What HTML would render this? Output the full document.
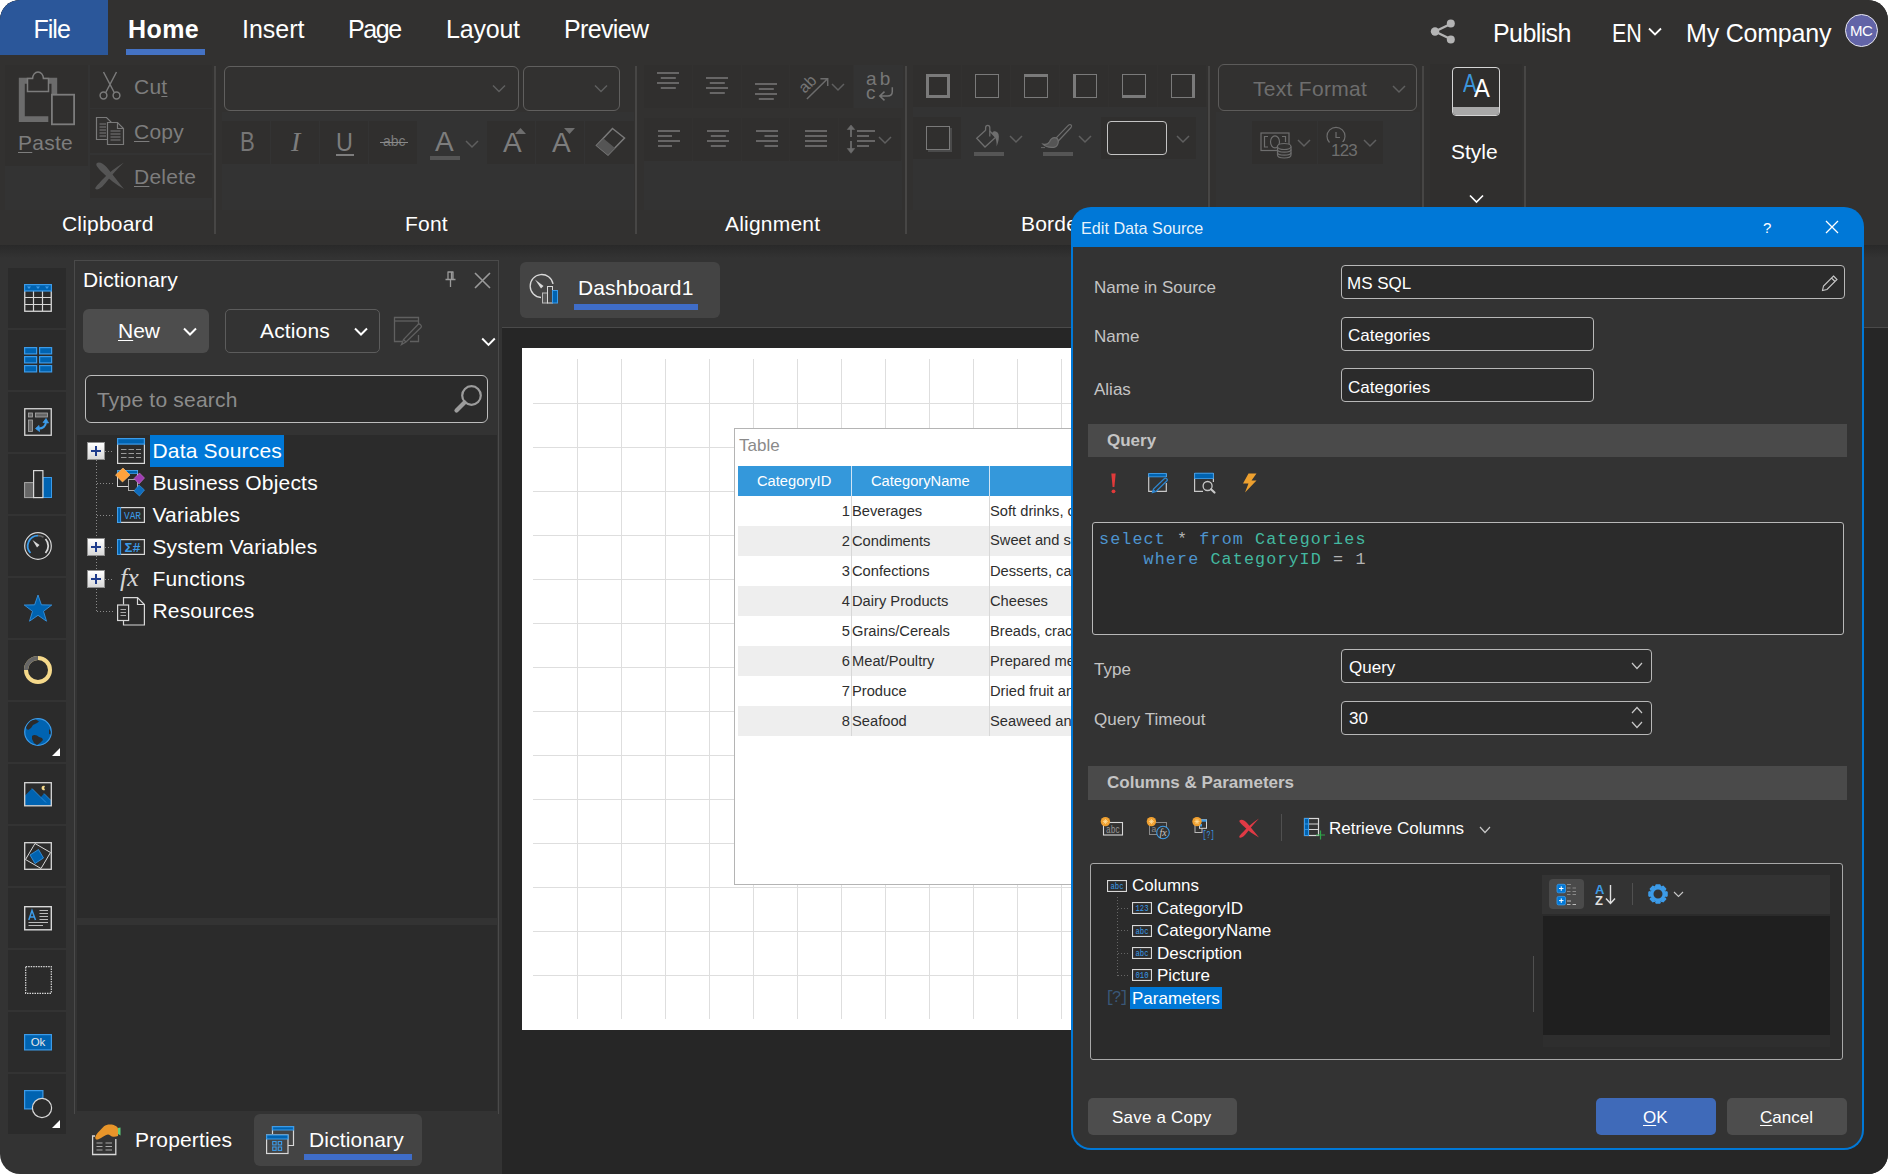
<!DOCTYPE html>
<html lang="en">
<head>
<meta charset="utf-8">
<title>Edit Data Source</title>
<style>
*{box-sizing:border-box;margin:0;padding:0}
html,body{width:1888px;height:1174px;overflow:hidden;background:#fff}
body{font-family:"Liberation Sans",Arial,sans-serif;color:#fff;font-size:20px}
#app{position:absolute;left:0;top:0;width:1888px;height:1174px;background:#333333;border-radius:20px;overflow:hidden}
.abs{position:absolute}
.t{position:absolute;white-space:nowrap;line-height:1}
svg{position:absolute;overflow:visible}
.u{text-decoration:underline;text-decoration-thickness:1px;text-underline-offset:1.500px}
</style>
</head>
<body>
<div id="app">
<!-- TOP BAR -->
<div class="abs" style="left:0;top:0;width:1888px;height:245px;background:#323130"></div>
<div class="abs" style="left:0;top:0;width:108px;height:54.500px;background:#2b579a"></div>
<div class="t tab" id="tFile" style="left:33.500px;top:17px;font-size:25px;letter-spacing:-1.0px">File</div>
<div class="t tab" id="tHome" style="left:128px;top:17px;font-size:25px;font-weight:bold;letter-spacing:0.400px">Home</div>
<div class="abs" style="left:126px;top:49px;width:79px;height:5.500px;background:#4472c4"></div>
<div class="t tab" id="tInsert" style="left:242px;top:17px;font-size:25px">Insert</div>
<div class="t tab" id="tPage" style="left:348px;top:17px;font-size:25px;letter-spacing:-1.4px">Page</div>
<div class="t tab" id="tLayout" style="left:446px;top:17px;font-size:25px;letter-spacing:-0.2px">Layout</div>
<div class="t tab" id="tPreview" style="left:564px;top:17px;font-size:25px;letter-spacing:-0.65px">Preview</div>
<svg style="left:1430px;top:18.600px" width="26" height="25" viewBox="0 0 26 25"><g stroke="#b4b4b4" stroke-width="2.4" fill="none"><path d="M5 12.5 L20.5 5 M5 12.5 L20.5 20"/></g><g fill="#b4b4b4"><circle cx="5" cy="12.5" r="4.2"/><circle cx="20.8" cy="4.6" r="4"/><circle cx="20.8" cy="20.4" r="4"/></g></svg>
<div class="t tab" id="tPublish" style="left:1493px;top:21px;font-size:25px;letter-spacing:-0.6px">Publish</div>
<div class="t tab" id="tEN" style="left:1611.500px;top:21px;font-size:25px;transform:scaleX(0.860);transform-origin:left top">EN</div>
<svg style="left:1648px;top:27px" width="14" height="9" viewBox="0 0 14 9"><path d="M1 1.5 L7 7.5 L13 1.5" stroke="#fff" stroke-width="1.8" fill="none"/></svg>
<div class="t tab" id="tCompany" style="left:1686px;top:21px;font-size:25px;letter-spacing:-0.2px">My Company</div>
<div class="abs" style="left:1845px;top:14px;width:33px;height:33px;border-radius:50%;background:#6264a7;border:1.5px solid #e8e8f0"></div>
<div class="t" id="tMC" style="left:1850px;top:23px;font-size:15px;letter-spacing:-0.5px">MC</div>
<!-- RIBBON A: clipboard + font -->
<style>
.rb{position:absolute;background:#302f2e}
.rg{position:absolute;background:#333333}
.rsep{position:absolute;top:66px;width:2px;height:168px;background:#474645}
.rl{letter-spacing:0.200px;position:absolute;white-space:nowrap;line-height:1;font-size:21px;color:#fff;top:213px}
.dis{color:#7d7d7d}
</style>
<div class="rg" style="left:5px;top:65px;width:207px;height:145px"></div>
<div class="rb" style="left:5px;top:65px;width:83px;height:101px"></div>
<div class="rb" style="left:90px;top:65px;width:122px;height:43px"></div>
<div class="rb" style="left:90px;top:109px;width:122px;height:44px"></div>
<div class="rb" style="left:90px;top:155px;width:122px;height:43px"></div>
<!-- paste icon -->
<svg style="left:18px;top:70px" width="58" height="56" viewBox="0 0 58 56">
<path d="M0.800 7.700 H39.200 V24 H33.500 V13.700 H6.800 V46.300 H30.300 V52 H0.800 Z" fill="#6c6c6c"/>
<path d="M9.500 21.500 V8.600 H14.600 A5.400 6.700 0 0 1 25.400 8.600 H30.500 V21.500 Z" stroke="#7c7c7c" stroke-width="1.500" fill="#302f2e"/>
<rect x="33.900" y="24.700" width="22.200" height="29.600" stroke="#7c7c7c" stroke-width="1.800" fill="#302f2e"/>
</svg>
<div class="t dis" id="rPaste" style="letter-spacing:0.250px;left:18px;top:132px;font-size:21px"><span class="u">P</span>aste</div>
<!-- cut icon -->
<svg style="left:99px;top:71px" width="22" height="30" viewBox="0 0 22 30" fill="none" stroke="#7a7a7a" stroke-width="1.5">
<path d="M4.5 1 L15.5 22 M17.5 1 L6.5 22"/><circle cx="4.5" cy="24.5" r="3.4"/><circle cx="17.5" cy="24.5" r="3.4"/></svg>
<div class="t dis" id="rCut" style="letter-spacing:0.250px;left:134px;top:76px;font-size:21px">Cu<span class="u">t</span></div>
<!-- copy icon -->
<svg style="left:95px;top:116px" width="30" height="30" viewBox="0 0 30 30" fill="#323130" stroke="#7a7a7a" stroke-width="1.2">
<path d="M1.5 1.5 H11.5 L16.5 6.5 V23.5 H1.5 Z"/><path d="M4.5 8 H11 M4.5 11 H11 M4.5 14 H11 M4.5 17 H11 M4.5 20 H11" stroke-width="1"/>
<path d="M12.5 6.5 H22.5 L28.5 12.5 V28.5 H12.5 Z"/><path d="M22.5 6.5 V12.5 H28.5" fill="none"/><path d="M15.5 15 H25.5 M15.5 18 H25.5 M15.5 21 H25.5 M15.5 24 H25.5" stroke-width="1"/></svg>
<div class="t dis" id="rCopy" style="letter-spacing:0.250px;left:134px;top:121px;font-size:21px"><span class="u">C</span>opy</div>
<!-- delete icon -->
<svg style="left:94px;top:161px" width="31" height="29" viewBox="0 0 31 29"><path d="M2.500 2.500 C4.500 0 9 2 12.500 6 C18 12.500 24 21 30 28 C22 23.500 14.500 17.500 9 12 C4.500 7.500 1.500 4.500 2.500 2.500 Z" fill="#555"/><path d="M30 1.500 C22 6 14.500 12 8.500 18.500 C4 23.500 0.500 26.500 1.500 28 C4 29.500 8 26.500 11.500 22 C16.500 15.500 23 8 30 1.500 Z" fill="#555"/></svg>
<div class="t dis" id="rDelete" style="letter-spacing:0.250px;left:134px;top:166px;font-size:21px"><span class="u">D</span>elete</div>
<div class="rl" id="lClipboard" style="left:62px">Clipboard</div>
<div class="rsep" style="left:214px"></div>
<!-- Font group -->
<div class="rg" style="left:222px;top:112px;width:412px;height:98px"></div>
<div class="abs" style="left:224px;top:66px;width:295px;height:45px;border:1.300px solid #605f5e;border-radius:6px"></div>
<svg style="left:492px;top:84px" width="14" height="9" viewBox="0 0 14 9"><path d="M1 1.500 L7 7.500 L13 1.500" stroke="#5f5f5f" stroke-width="1.5" fill="none"/></svg>
<div class="abs" style="left:523px;top:66px;width:97px;height:45px;border:1.300px solid #605f5e;border-radius:6px"></div>
<svg style="left:594px;top:84px" width="14" height="9" viewBox="0 0 14 9"><path d="M1 1.500 L7 7.500 L13 1.500" stroke="#5f5f5f" stroke-width="1.5" fill="none"/></svg>
<div class="rb" style="left:222px;top:121px;width:48px;height:43px"></div>
<div class="rb" style="left:271px;top:121px;width:48px;height:43px"></div>
<div class="rb" style="left:320px;top:121px;width:48px;height:43px"></div>
<div class="rb" style="left:369px;top:121px;width:48px;height:43px"></div>
<div class="rg" style="left:418px;top:121px;width:68px;height:43px"></div>
<div class="rb" style="left:487px;top:121px;width:48px;height:43px"></div>
<div class="rb" style="left:536px;top:121px;width:48px;height:43px"></div>
<div class="rb" style="left:585px;top:121px;width:49px;height:43px"></div>
<!-- font buttons -->
<div class="t dis" id="fB" style="left:240px;top:129px;font-size:27px;transform:scaleX(0.820);transform-origin:left top;color:#767676">B</div>
<div class="t dis" id="fI" style="left:291px;top:128px;font-size:28px;font-family:'Liberation Serif',serif;font-style:italic">I</div>
<div class="t dis" id="fU" style="left:336px;top:129px;font-size:26px;transform:scaleX(0.9);transform-origin:left top">U</div>
<div class="abs" style="left:336px;top:154px;width:18px;height:2px;background:#7d7d7d"></div>
<div class="t dis" id="fabc" style="left:383px;top:134px;font-size:14px">abc</div>
<div class="abs" style="left:380px;top:142px;width:28px;height:1px;background:#8a8a8a"></div>
<div class="t dis" id="fA" style="left:435px;top:128px;font-size:28px">A</div>
<div class="abs" style="left:430px;top:156px;width:30px;height:4px;background:#555"></div>
<svg style="left:465px;top:140px" width="14" height="9" viewBox="0 0 14 9"><path d="M1 1 L7 7 L13 1" stroke="#5f5f5f" stroke-width="1.5" fill="none"/></svg>
<div class="t dis" id="fAu" style="left:503px;top:129px;font-size:28px">A</div>
<svg style="left:515px;top:128px" width="11" height="6" viewBox="0 0 11 6"><path d="M0 6 L5.500 0 L11 6 Z" fill="#6e6e6e"/></svg>
<div class="t dis" id="fAd" style="left:552px;top:129px;font-size:28px">A</div>
<svg style="left:564px;top:128px" width="11" height="6" viewBox="0 0 11 6"><path d="M0 0 L5.500 6 L11 0 Z" fill="#6e6e6e"/></svg>
<svg style="left:595px;top:127px" width="31" height="30" viewBox="0 0 31 30"><path d="M17.500 1.500 L29.500 11 L13 28 L1.500 18.500 Z" fill="none" stroke="#7a7a7a" stroke-width="1.5"/><path d="M8.500 11.500 L20 21 L13 28 L1.500 18.500 Z" fill="#555"/></svg>
<div class="rl" id="lFont" style="left:405px">Font</div>
<div class="rsep" style="left:635px"></div>
<!-- RIBBON B: alignment -->
<div class="rg" style="left:644px;top:160px;width:258px;height:50px"></div>
<div class="rb" style="left:644px;top:65px;width:48px;height:43px"></div>
<div class="rb" style="left:693px;top:65px;width:48px;height:43px"></div>
<div class="rb" style="left:742px;top:65px;width:47px;height:43px"></div>
<div class="rb" style="left:790px;top:65px;width:63px;height:43px"></div>
<div class="rg" style="left:854px;top:65px;width:49px;height:43px"></div>
<div class="rb" style="left:644px;top:117.500px;height:43.500px;width:48px"></div>
<div class="rb" style="left:693px;top:117.500px;height:43.500px;width:48px"></div>
<div class="rb" style="left:742px;top:117.500px;height:43.500px;width:47px"></div>
<div class="rb" style="left:790px;top:117.500px;height:43.500px;width:48px"></div>
<div class="rb" style="left:839px;top:117.500px;height:43.500px;width:62px"></div>
<svg style="left:0;top:0" width="1" height="1"><path d="M657.0 73 H679.0 M660.8 78 H675.8 M657.0 83 H679.0 M660.8 88 H675.8 " stroke="#7a7a7a" stroke-width="1.6" fill="none"/></svg>
<svg style="left:0;top:0" width="1" height="1"><path d="M706.0 78 H728.0 M709.8 83 H724.8 M706.0 88 H728.0 M709.8 93 H724.8 " stroke="#7a7a7a" stroke-width="1.6" fill="none"/></svg>
<svg style="left:0;top:0" width="1" height="1"><path d="M755.0 84 H777.0 M758.8 89 H773.8 M755.0 94 H777.0 M758.8 99 H773.8 " stroke="#7a7a7a" stroke-width="1.6" fill="none"/></svg>
<svg style="left:0;top:0" width="1" height="1"><path d="M658.0 131 H680.0 M658.0 136 H672.0 M658.0 141 H680.0 M658.0 146 H672.0 " stroke="#7a7a7a" stroke-width="1.6" fill="none"/></svg>
<svg style="left:0;top:0" width="1" height="1"><path d="M707.0 131 H729.0 M710.8 136 H725.8 M707.0 141 H729.0 M710.8 146 H725.8 " stroke="#7a7a7a" stroke-width="1.6" fill="none"/></svg>
<svg style="left:0;top:0" width="1" height="1"><path d="M756.0 131 H778.0 M764.5 136 H778.0 M756.0 141 H778.0 M764.5 146 H778.0 " stroke="#7a7a7a" stroke-width="1.6" fill="none"/></svg>
<svg style="left:0;top:0" width="1" height="1"><path d="M805.0 131 H827.0 M805.0 136 H827.0 M805.0 141 H827.0 M805.0 146 H827.0 " stroke="#7a7a7a" stroke-width="1.6" fill="none"/></svg>
<svg style="left:0;top:0" width="1" height="1"><path d="M857.0 131 H875.0 M857.0 136 H869.0 M857.0 141 H875.0 M857.0 146 H869.0 " stroke="#7a7a7a" stroke-width="1.6" fill="none"/></svg>
<svg style="left:846px;top:124px" width="10" height="30" viewBox="0 0 10 30"><path d="M5 4 V13 M5 17 V26" stroke="#6c6c6c" stroke-width="1.800"/><path d="M1.300 5.500 L5 1 L8.700 5.500 Z M1.300 24.500 L5 29.300 L8.700 24.500 Z" fill="#6c6c6c" stroke="#6c6c6c" stroke-width="0.600"/></svg>
<svg style="left:878px;top:136px" width="14" height="9" viewBox="0 0 14 9"><path d="M1 1 L7 7 L13 1" stroke="#5f5f5f" stroke-width="1.5" fill="none"/></svg>
<svg style="left:831px;top:83px" width="14" height="9" viewBox="0 0 14 9"><path d="M1 1 L7 7 L13 1" stroke="#5f5f5f" stroke-width="1.5" fill="none"/></svg>
<svg style="left:0;top:0" width="1" height="1"><text transform="translate(808.300,85) rotate(-45)" x="0" y="4" text-anchor="middle" font-size="16" fill="#757575" font-family="Liberation Sans,Arial,sans-serif">ab</text><path d="M806.900 99 L827.500 78.700 M820.400 78.700 H827.700 V86" stroke="#6c6c6c" stroke-width="1.500" fill="none"/><path d="M892.300 87.200 V91.500 Q892.300 96 887.500 96 H880 M884.500 91.600 L879.800 96 L884.500 100.400" stroke="#757575" stroke-width="1.500" fill="none"/></svg>
<div class="t dis" id="aWrap1" style="left:866px;top:68.600px;font-size:19px;letter-spacing:3.200px;color:#777">ab</div>
<div class="t dis" id="aWrap2" style="left:866px;top:82.900px;font-size:19px;color:#777">c</div>
<div class="rl" id="lAlign" style="left:725px">Alignment</div>
<div class="rsep" style="left:905px"></div>
<!-- RIBBON C: borders -->
<div class="rg" style="left:913px;top:107px;width:294px;height:103px"></div>
<div class="rb" style="left:913px;top:65px;width:48px;height:42px"></div>
<div class="rb" style="left:962px;top:65px;width:48px;height:42px"></div>
<div class="rb" style="left:1011px;top:65px;width:48px;height:42px"></div>
<div class="rb" style="left:1060px;top:65px;width:48px;height:42px"></div>
<div class="rb" style="left:1109px;top:65px;width:48px;height:42px"></div>
<div class="rb" style="left:1158px;top:65px;width:48px;height:42px"></div>
<div class="rb" style="left:913px;top:117px;width:48px;height:42px"></div>
<div class="rb" style="left:1101px;top:117px;width:95px;height:42px"></div>
<div class="abs" style="left:926px;top:74px;width:24px;height:24px;border:3px solid #7a7a7a"></div>
<div class="abs" style="left:975px;top:74px;width:24px;height:24px;border:1.3px solid #7a7a7a"></div>
<div class="abs" style="left:1024px;top:74px;width:24px;height:24px;border:1.3px solid #7a7a7a;border-top-width:3.5px"></div>
<div class="abs" style="left:1073px;top:74px;width:24px;height:24px;border:1.3px solid #7a7a7a;border-left-width:3.5px"></div>
<div class="abs" style="left:1122px;top:74px;width:24px;height:24px;border:1.3px solid #7a7a7a;border-bottom-width:3.5px"></div>
<div class="abs" style="left:1171px;top:74px;width:24px;height:24px;border:1.3px solid #7a7a7a;border-right-width:3.5px"></div>
<div class="abs" style="left:926px;top:126px;width:24px;height:24px;border:1.3px solid #7a7a7a;box-shadow:2px 2px 0 #4a4a4a"></div>
<svg style="left:975px;top:123px" width="28" height="26" viewBox="0 0 28 26" fill="none" stroke="#6e6e6e" stroke-width="1.300"><path d="M10.600 7.200 L1.700 15.300 L10 24 L20.700 14.300 L14.800 8"/><path d="M10.600 7.500 V4.700 C10.600 1.700 14.800 1.700 14.800 4.700 V13.600"/><path d="M17.200 10 C18 7.500 22 7.500 23.500 11 C24.500 14 23.500 19 21.600 23.500 C21.800 19 21 15.500 19.500 13.500 C18.500 12.300 17 11.500 17.200 10 Z" fill="#6e6e6e" stroke="none"/></svg>
<div class="abs" style="left:974px;top:152px;width:30px;height:4px;background:#555"></div>
<svg style="left:1009px;top:135px" width="14" height="9" viewBox="0 0 14 9"><path d="M1 1 L7 7 L13 1" stroke="#5f5f5f" stroke-width="1.5" fill="none"/></svg>
<svg style="left:1041px;top:122px" width="32" height="28" viewBox="0 0 32 28" fill="none" stroke="#6e6e6e" stroke-width="1.200"><path d="M15 16.200 L27.500 3.200 C29.500 1.500 31.500 3.500 30 5.500 L17.300 19 Z"/><path d="M15 15.800 C16.500 16.500 17.500 18 17.300 20 C17 23 15.500 25 13 25.300 C9.500 25.700 5 25.500 2 22.200 C5 22.800 7.500 21.500 8.500 19.800 C9.500 17.500 12 15 15 15.800 Z" fill="#555" stroke="#6e6e6e"/><path d="M0 25.600 H4" stroke-width="0.900"/></svg>
<div class="abs" style="left:1043px;top:152px;width:30px;height:4px;background:#555"></div>
<svg style="left:1078px;top:135px" width="14" height="9" viewBox="0 0 14 9"><path d="M1 1 L7 7 L13 1" stroke="#5f5f5f" stroke-width="1.5" fill="none"/></svg>
<div class="abs" style="left:1107px;top:121px;width:60px;height:34px;border:1.5px solid #c4c4c4;border-radius:4px"></div>
<svg style="left:1176px;top:135px" width="14" height="9" viewBox="0 0 14 9"><path d="M1 1 L7 7 L13 1" stroke="#5f5f5f" stroke-width="1.5" fill="none"/></svg>
<div class="rl" id="lBorders" style="left:1021px">Borders</div>
<div class="rsep" style="left:1208px"></div>
<div class="rg" style="left:1216px;top:112px;width:204px;height:98px"></div>
<div class="abs" style="left:1218px;top:64px;width:199px;height:47px;border:1.300px solid #5c5b5a;border-radius:6px"></div>
<div class="t" id="tTF" style="left:1253px;top:78px;font-size:21px;color:#6e6e6e;letter-spacing:0.3px">Text Format</div>
<svg style="left:1392px;top:85px" width="14" height="9" viewBox="0 0 14 9"><path d="M1 1 L7 7 L13 1" stroke="#5f5f5f" stroke-width="1.5" fill="none"/></svg>
<div class="rb" style="left:1252px;top:121px;width:65px;height:43px"></div>
<div class="rb" style="left:1318px;top:121px;width:65px;height:43px"></div>
<svg style="left:1260px;top:132px" width="33" height="27" viewBox="0 0 33 27" fill="none" stroke="#6e6e6e" stroke-width="1.2"><rect x="1" y="1" width="28" height="17.500"/><path d="M8 4.500 H4.500 V15 H8 M22 4.500 H25.500 V10"/><ellipse cx="15" cy="9.800" rx="4.500" ry="6"/><path d="M17.500 14.500 V23 C17.500 27 31 27 31 23 V14.500" fill="#323130"/><ellipse cx="24.200" cy="14.500" rx="6.800" ry="3" fill="#323130"/><path d="M17.500 17.500 C17.500 21 31 21 31 17.500 M17.500 20.500 C17.500 24 31 24 31 20.500"/></svg>
<svg style="left:1297px;top:139px" width="14" height="9" viewBox="0 0 14 9"><path d="M1 1 L7 7 L13 1" stroke="#5f5f5f" stroke-width="1.5" fill="none"/></svg>
<svg style="left:1326px;top:127px" width="20" height="20" viewBox="0 0 20 20" fill="none" stroke="#6e6e6e" stroke-width="1.2"><path d="M3.500 15.500 A9 9 0 1 1 16.500 15.500"/><path d="M10 5 V10.500 H14"/></svg>
<div class="t" id="t123" style="left:1331px;top:142px;font-size:17px;color:#6e6e6e;letter-spacing:-0.8px;background:#2f2e2d">123</div>
<svg style="left:1363px;top:139px" width="14" height="9" viewBox="0 0 14 9"><path d="M1 1 L7 7 L13 1" stroke="#5f5f5f" stroke-width="1.5" fill="none"/></svg>
<div class="rsep" style="left:1422px"></div>
<div class="rb" style="left:1430px;top:64px;width:92px;height:181px"></div>
<div class="abs" style="left:1452px;top:67px;width:48px;height:49px;border:1.5px solid #d4d4d4;border-radius:4px;overflow:hidden;background:#2f2e2d"><div class="abs" style="left:0;top:39px;width:48px;height:9px;background:#a8a8a8"></div></div>
<div class="t" id="sA1" style="left:1463px;top:69.500px;font-size:26px;color:#3c96dc;transform:scaleX(0.78);transform-origin:left top">A</div>
<div class="t" id="sA2" style="left:1473.500px;top:75.500px;font-size:25px;color:#fff;transform:scaleX(0.95);transform-origin:left top">A</div>
<div class="t" id="sStyle" style="left:1451px;top:141px;font-size:21px;color:#fff">Style</div>
<svg style="left:1469px;top:194px" width="15" height="10" viewBox="0 0 15 10"><path d="M1 1.500 L7.500 8 L14 1.500" stroke="#fff" stroke-width="1.7" fill="none"/></svg>
<div class="rsep" style="left:1524px"></div>
<div class="abs" style="left:0;top:245px;width:1888px;height:13px;background:linear-gradient(#292929,#333333)"></div>
<!-- TOOLBOX -->
<div class="abs" style="left:8px;top:268px;width:58px;height:60px;background:#2b2b2b"></div>
<svg style="left:24px;top:284px" width="28" height="28" viewBox="0 0 28 28"><rect x="0.75" y="0.75" width="26.500" height="26.500" fill="none" stroke="#d8d8d8" stroke-width="1.3"/><path d="M9.500 7 V27 M18.500 7 V27 M1 13.500 H27 M1 20.500 H27" stroke="#d8d8d8" stroke-width="1.2"/><rect x="0.600" y="0.600" width="26.800" height="6.400" fill="#0063b1" stroke="#3c9be8" stroke-width="1.2"/><path d="M3 2.500 H7 L5 5 Z M12 2.500 H16 L14 5 Z M21 2.500 H25 L23 5 Z" fill="#3c9be8"/></svg>
<div class="abs" style="left:8px;top:330px;width:58px;height:60px;background:#2b2b2b"></div>
<svg style="left:24px;top:346px" width="28" height="28" viewBox="0 0 28 28"><rect x="0.6" y="1.6" width="12" height="6.300" fill="#0063b1" stroke="#3c9be8" stroke-width="1.200"/><rect x="15.6" y="1.6" width="12" height="6.300" fill="#0063b1" stroke="#3c9be8" stroke-width="1.200"/><rect x="0.6" y="10.6" width="12" height="6.300" fill="#0063b1" stroke="#3c9be8" stroke-width="1.200"/><rect x="15.6" y="10.6" width="12" height="6.300" fill="#0063b1" stroke="#3c9be8" stroke-width="1.200"/><rect x="0.6" y="19.6" width="12" height="6.300" fill="#0063b1" stroke="#3c9be8" stroke-width="1.200"/><rect x="15.6" y="19.6" width="12" height="6.300" fill="#0063b1" stroke="#3c9be8" stroke-width="1.200"/></svg>
<div class="abs" style="left:8px;top:392px;width:58px;height:60px;background:#2b2b2b"></div>
<svg style="left:24px;top:407px" width="28" height="28" viewBox="0 0 28 28"><rect x="0.75" y="1.750" width="26.500" height="26.500" fill="none" stroke="#d8d8d8" stroke-width="1.3"/><rect x="4.500" y="6" width="4" height="4" fill="#666" stroke="#aaa" stroke-width="0.800"/><rect x="11.500" y="6" width="12" height="4" fill="#666" stroke="#aaa" stroke-width="0.800"/><rect x="4.500" y="13" width="4" height="11.500" fill="#666" stroke="#aaa" stroke-width="0.800"/><path d="M13.500 21.500 C19 22 22 19 22 14.500" fill="none" stroke="#3c9be8" stroke-width="2"/><path d="M15 18.500 L11.500 21.500 L15.500 24.500 Z M19 15.500 L22 11.500 L24.500 16 Z" fill="#3c9be8" stroke="#3c9be8" stroke-width="0.800"/></svg>
<div class="abs" style="left:8px;top:454px;width:58px;height:60px;background:#2b2b2b"></div>
<svg style="left:24px;top:470px" width="28" height="28" viewBox="0 0 28 28"><rect x="0.600" y="12.600" width="9" height="15" fill="#666" stroke="#aaa" stroke-width="1"/><rect x="19" y="7.500" width="8.500" height="20" fill="#0063b1" stroke="#3c9be8" stroke-width="1"/><rect x="9.600" y="0.600" width="9.300" height="27" fill="#2b2b2b" stroke="#d8d8d8" stroke-width="1.2"/></svg>
<div class="abs" style="left:8px;top:516px;width:58px;height:60px;background:#2b2b2b"></div>
<svg style="left:24px;top:532px" width="28" height="28" viewBox="0 0 28 28"><circle cx="14" cy="14" r="13.3" fill="none" stroke="#d8d8d8" stroke-width="1.2"/><path d="M6.500 21 A10.300 10.300 0 0 1 14 3.700" fill="none" stroke="#3c9be8" stroke-width="1.800"/><path d="M14 3.700 A10.300 10.300 0 0 1 19.500 5.300" fill="none" stroke="#666" stroke-width="1.800"/><path d="M21.500 7 A10.300 10.300 0 0 1 21.500 21" fill="none" stroke="#d8d8d8" stroke-width="1.800"/><path d="M8.500 8 L15.500 13 L13 15.500 Z" fill="#d8d8d8"/></svg>
<div class="abs" style="left:8px;top:578px;width:58px;height:60px;background:#2b2b2b"></div>
<svg style="left:24px;top:594px" width="28" height="28" viewBox="0 0 28 28"><path d="M14.0 1.0 L17.4 10.8 L27.8 11.0 L19.5 17.3 L22.5 27.2 L14.0 21.3 L5.5 27.2 L8.5 17.3 L0.2 11.0 L10.6 10.8 Z" fill="#0063b1" stroke="#3c9be8" stroke-width="0.800"/></svg>
<div class="abs" style="left:8px;top:640px;width:58px;height:60px;background:#2b2b2b"></div>
<svg style="left:24px;top:656px" width="28" height="28" viewBox="0 0 28 28"><circle cx="14" cy="14" r="12" fill="none" stroke="#f5d98b" stroke-width="4"/><path d="M2 14 A12 12 0 0 1 14 2" fill="none" stroke="#666" stroke-width="4"/></svg>
<div class="abs" style="left:8px;top:702px;width:58px;height:60px;background:#2b2b2b"></div>
<svg style="left:24px;top:718px" width="28" height="28" viewBox="0 0 28 28"><circle cx="14" cy="14" r="13.300" fill="#0063b1" stroke="#3c9be8" stroke-width="1.200"/><path d="M9 2 C6 3 3 6 2 10 L4 12 L7 10 L9 7 L13 5 L15 3.500 L12 1.500 Z" fill="#2b2b2b"/><path d="M8 18 C10 16 13 17 15 19 L18 20 L19 22 L16 25 L13 27 L10 25 L8 21 Z" fill="#2b2b2b"/><path d="M25 11 C26.500 12 27 14 26.500 16.500 L25 16 Z" fill="#2b2b2b"/></svg>
<svg style="left:52px;top:748px" width="8" height="8" viewBox="0 0 8 8"><path d="M8 0 V8 H0 Z" fill="#fff"/></svg>
<div class="abs" style="left:8px;top:764px;width:58px;height:60px;background:#2b2b2b"></div>
<svg style="left:24px;top:780px" width="28" height="28" viewBox="0 0 28 28"><path d="M1 15.500 L8 8.500 L21.500 22 L21.500 25.500 H1 Z M17 17 L20 13.500 L27 20.500 V25.500 H21 Z" fill="#0063b1"/><path d="M8 8.500 L22 22.500 M20 13.500 L27 20.500" stroke="#3c9be8" stroke-width="0.700"/><rect x="0.700" y="2.700" width="26.600" height="23.100" fill="none" stroke="#d8d8d8" stroke-width="1.300"/><path d="M21 6 A2.300 2.300 0 1 0 21 10 A3 3 0 0 1 21 6 Z" fill="#f5d98b"/></svg>
<div class="abs" style="left:8px;top:826px;width:58px;height:60px;background:#2b2b2b"></div>
<svg style="left:24px;top:842px" width="28" height="28" viewBox="0 0 28 28"><rect x="0.700" y="0.700" width="26.600" height="26.600" fill="none" stroke="#d8d8d8" stroke-width="1.300"/><path d="M11 1.500 L26.500 10.500 L17 26.500 L1.500 17.500 Z" fill="none" stroke="#d8d8d8" stroke-width="1"/><path d="M6 13 L14.500 7.500 L19.500 16 L11 21.500 Z" fill="#0063b1" stroke="#3c9be8" stroke-width="0.800"/></svg>
<div class="abs" style="left:8px;top:888px;width:58px;height:60px;background:#2b2b2b"></div>
<svg style="left:24px;top:904px" width="28" height="28" viewBox="0 0 28 28"><rect x="0.700" y="2.700" width="26.600" height="23.100" fill="none" stroke="#d8d8d8" stroke-width="1.400"/><path d="M15.500 6.500 H24 M15.500 9.500 H24 M15.500 12.500 H24 M15.500 15.500 H24 M4.500 18.500 H24 M4.500 21.500 H19" stroke="#bbb" stroke-width="1"/><path d="M4.800 16 L8 6.500 L11.500 16 M6 13 H10.500" fill="none" stroke="#3c9be8" stroke-width="1.500"/></svg>
<div class="abs" style="left:8px;top:950px;width:58px;height:60px;background:#2b2b2b"></div>
<svg style="left:24px;top:966px" width="28" height="28" viewBox="0 0 28 28"><rect x="1.700" y="0.700" width="25.600" height="26.600" fill="none" stroke="#d8d8d8" stroke-width="1.200" stroke-dasharray="1.500 1"/></svg>
<div class="abs" style="left:8px;top:1012px;width:58px;height:60px;background:#2b2b2b"></div>
<svg style="left:24px;top:1028px" width="28" height="28" viewBox="0 0 28 28"><rect x="0.600" y="6.600" width="26.800" height="15.300" fill="#0063b1" stroke="#3c9be8" stroke-width="1.200"/><text x="14" y="18.300" font-size="11.500" fill="#e8e8e8" text-anchor="middle" font-family="Liberation Sans,Arial,sans-serif">Ok</text></svg>
<div class="abs" style="left:8px;top:1074px;width:58px;height:60px;background:#2b2b2b"></div>
<svg style="left:24px;top:1090px" width="28" height="28" viewBox="0 0 28 28"><rect x="0.600" y="0.600" width="18.300" height="18.300" fill="#0063b1" stroke="#3c9be8" stroke-width="1.200"/><circle cx="18" cy="18" r="9.600" fill="#2b2b2b" stroke="#d8d8d8" stroke-width="1.200"/></svg>
<svg style="left:52px;top:1120px" width="8" height="8" viewBox="0 0 8 8"><path d="M8 0 V8 H0 Z" fill="#fff"/></svg>
<!-- DICTIONARY PANEL -->
<div class="abs" style="left:74px;top:260px;width:425px;height:854px;border:1px solid #4a4a4a;border-bottom:none;background:#333333"></div>
<div class="t" id="dTitle" style="letter-spacing:0.15px;left:83px;top:269px;font-size:21px">Dictionary</div>
<svg style="left:444px;top:271px" width="13" height="17" viewBox="0 0 13 17" fill="none" stroke="#9a9a9a" stroke-width="1.300"><path d="M3.500 1 H9.500 M4 1 V8 M9 1 V8 M7.500 1 V8 M1.500 8.500 H11.500 M6.500 8.500 V16"/></svg>
<svg style="left:474px;top:272px" width="17" height="17" viewBox="0 0 17 17"><path d="M1 1 L16 16 M16 1 L1 16" stroke="#9a9a9a" stroke-width="1.600"/></svg>
<div class="abs" style="left:83px;top:309px;width:126px;height:44px;background:#4d4d4d;border-radius:6px"></div>
<div class="t" id="dNew" style="left:118px;top:320.200px;font-size:21px"><span class="u">N</span>ew</div>
<svg style="left:183px;top:327px" width="14" height="9" viewBox="0 0 14 9"><path d="M1 1.500 L7 7.500 L13 1.500" stroke="#fff" stroke-width="2" fill="none"/></svg>
<div class="abs" style="left:225px;top:309px;width:155px;height:44px;border:1px solid #5c5c5c;border-radius:5px"></div>
<div class="t" id="dActions" style="letter-spacing:0.15px;left:260px;top:320.200px;font-size:21px">Actions</div>
<svg style="left:354px;top:327px" width="14" height="9" viewBox="0 0 14 9"><path d="M1 1.500 L7 7.500 L13 1.500" stroke="#fff" stroke-width="2" fill="none"/></svg>
<svg style="left:393px;top:316px" width="31" height="30" viewBox="0 0 31 30" fill="none" stroke="#606060" stroke-width="1.300"><path d="M25.500 10 V1.500 H1.500 V25.500 H9 M17 25.500 H25.500 V19"/><path d="M1.500 5 H25.500" /><path d="M25 8.500 C26.500 7 29.500 10 28 11.500 L13 26 L8.500 28.500 L10.500 23.500 Z" fill="#333"/><path d="M10.500 23.500 L13 26"/></svg>
<svg style="left:481px;top:337px" width="15" height="10" viewBox="0 0 15 10"><path d="M1.200 1.500 L7.500 8 L13.800 1.500" stroke="#fff" stroke-width="1.900" fill="none"/></svg>
<div class="abs" style="left:85px;top:375px;width:403px;height:48px;border:1.500px solid #bdbdbd;border-radius:6px;background:#2b2b2b"></div>
<div class="t" id="dSearch" style="left:97px;top:389.200px;font-size:21px;color:#8c8c8c;letter-spacing:0.2px">Type to search</div>
<svg style="left:453px;top:384px" width="30" height="30" viewBox="0 0 30 30" fill="none"><circle cx="18.500" cy="11.500" r="9.300" stroke="#9c9c9c" stroke-width="2.200"/><path d="M11.500 18.500 L3.500 26.500" stroke="#9c9c9c" stroke-width="4.200" stroke-linecap="round"/></svg>
<div class="abs" style="left:77px;top:435px;width:420px;height:483px;background:#2b2b2b"></div>
<div class="abs" style="left:77px;top:925px;width:420px;height:186px;background:#2b2b2b"></div>
<svg style="left:0;top:0" width="1" height="1"><path d="M96.500 460 V611 M105 451.500 H114 M97 483.500 H114 M97 515.500 H114 M105 547.500 H114 M105 579.500 H114 M97 611.500 H114" stroke="#8a8a8a" stroke-width="1" stroke-dasharray="1 2" fill="none"/></svg>
<div class="abs" style="left:150px;top:435px;width:134px;height:32px;background:#0078d7"></div>
<div class="t" id="tr0" style="left:152.400px;letter-spacing:0.2px;top:440px;font-size:21px">Data Sources</div>
<div class="abs" style="left:87px;top:442px;width:18px;height:18px;background:linear-gradient(#fff,#d8d8d8);border:1px solid #8f8f8f"></div>
<svg style="left:87px;top:442px" width="18" height="18" viewBox="0 0 18 18"><path d="M4 9 H14 M9 4 V14" stroke="#1f3c8c" stroke-width="2"/></svg>
<div class="t" id="tr1" style="left:152.400px;letter-spacing:0.2px;top:472px;font-size:21px">Business Objects</div>
<div class="t" id="tr2" style="left:152.400px;letter-spacing:0.2px;top:504px;font-size:21px">Variables</div>
<div class="t" id="tr3" style="left:152.400px;letter-spacing:0.2px;top:536px;font-size:21px">System Variables</div>
<div class="abs" style="left:87px;top:538px;width:18px;height:18px;background:linear-gradient(#fff,#d8d8d8);border:1px solid #8f8f8f"></div>
<svg style="left:87px;top:538px" width="18" height="18" viewBox="0 0 18 18"><path d="M4 9 H14 M9 4 V14" stroke="#1f3c8c" stroke-width="2"/></svg>
<div class="t" id="tr4" style="left:152.400px;letter-spacing:0.2px;top:568px;font-size:21px">Functions</div>
<div class="abs" style="left:87px;top:570px;width:18px;height:18px;background:linear-gradient(#fff,#d8d8d8);border:1px solid #8f8f8f"></div>
<svg style="left:87px;top:570px" width="18" height="18" viewBox="0 0 18 18"><path d="M4 9 H14 M9 4 V14" stroke="#1f3c8c" stroke-width="2"/></svg>
<div class="t" id="tr5" style="left:152.400px;letter-spacing:0.2px;top:600px;font-size:21px">Resources</div>
<svg style="left:117px;top:438px" width="28" height="26" viewBox="0 0 28 26"><rect x="0.600" y="0.600" width="26.800" height="24.800" fill="#2b2b2b" stroke="#d8d8d8" stroke-width="1.200"/><rect x="0.600" y="0.600" width="26.800" height="5.500" fill="#0063b1" stroke="#3c9be8" stroke-width="1.200"/><path d="M4 11.500 H9.500 M11.500 11.500 H17 M19 11.500 H24 M4 15.500 H9.500 M11.500 15.500 H17 M19 15.500 H24 M4 19.500 H9.500 M11.500 19.500 H17 M19 19.500 H24" stroke="#9a9a9a" stroke-width="1.200"/></svg>
<svg style="left:115px;top:467px" width="30" height="30" viewBox="0 0 30 30"><rect x="2.500" y="3.500" width="20" height="16" fill="none" stroke="#d8d8d8" stroke-width="1"/><rect x="2.500" y="3.500" width="20" height="3" fill="#0063b1" stroke="#3c9be8" stroke-width="0.800"/><rect x="13.500" y="12.500" width="9" height="11" fill="#2b2b2b" stroke="#aaa" stroke-width="1"/><path d="M8 1 L15 8 L7.500 15 L0.500 8 Z" fill="#ffa23c" stroke="#ffc27a" stroke-width="0.600"/><path d="M24.500 6 L29.500 11 L24 17 L19 11.500 Z" fill="#a03cb4" stroke="#c67ad4" stroke-width="0.600"/><path d="M24 18 L29.500 23 L24.500 29 L19 24 Z" fill="#0f6cbd" stroke="#3c9be8" stroke-width="0.600"/></svg>
<svg style="left:117px;top:507px" width="28" height="16" viewBox="0 0 28 16"><rect x="0.600" y="0.600" width="26.800" height="14.800" fill="#2b2b2b" stroke="#d8d8d8" stroke-width="1.200"/><rect x="0.600" y="0.600" width="3" height="14.800" fill="#0063b1" stroke="#3c9be8" stroke-width="1"/><text x="15.500" y="12" font-size="10.500" fill="#3c9be8" text-anchor="middle" font-family="Liberation Mono,monospace" textLength="17" lengthAdjust="spacingAndGlyphs">VAR</text></svg>
<svg style="left:117px;top:539px" width="28" height="16" viewBox="0 0 28 16"><rect x="0.600" y="0.600" width="26.800" height="14.800" fill="#2b2b2b" stroke="#d8d8d8" stroke-width="1.200"/><rect x="0.600" y="0.600" width="3" height="14.800" fill="#0063b1" stroke="#3c9be8" stroke-width="1"/><text x="15.500" y="12.500" font-size="12.500" fill="#3c9be8" text-anchor="middle" font-family="Liberation Mono,monospace" font-weight="bold" textLength="16" lengthAdjust="spacingAndGlyphs">Σ#</text></svg>
<div class="t" id="trfx" style="left:120px;top:565px;font-size:26px;font-family:'Liberation Serif',serif;font-style:italic;color:#d4d4d4;letter-spacing:0px">fx</div>
<svg style="left:116px;top:597px" width="30" height="29" viewBox="0 0 30 29" fill="#2b2b2b" stroke="#d8d8d8" stroke-width="1.200"><path d="M7.500 7.500 V0.600 H21.500 L28.400 7.500 V28 H7.500 V24"/><path d="M21.500 0.600 V7.500 H28.400" fill="none"/><rect x="1.600" y="8" width="11" height="15.500"/><path d="M4.500 12.500 H10 M4.500 15.500 H10 M4.500 18.500 H10" stroke-width="1" stroke="#aaa"/></svg>
<div class="abs" style="left:254px;top:1114px;width:168px;height:52px;background:#444444;border-radius:6px"></div>
<div class="t" id="bProps" style="letter-spacing:0.15px;left:135px;top:1129px;font-size:21px">Properties</div>
<div class="t" id="bDict" style="letter-spacing:0.15px;left:309px;top:1129px;font-size:21px">Dictionary</div>
<div class="abs" style="left:304px;top:1154px;width:108px;height:6px;background:#3f6dc8"></div>
<svg style="left:90px;top:1122px" width="32" height="34" viewBox="0 0 32 34"><path d="M5 14 H2.600 V32.500 H25.800 V17" fill="none" stroke="#d8d8d8" stroke-width="1.300"/><path d="M6.500 21 H12.500 M15.500 21 H22 M6.500 24.500 H12.500 M15.500 24.500 H22 M6.500 28 H12.500 M15.500 28 H22" stroke="#aaa" stroke-width="1.200"/><path d="M5.500 16.700 C4.500 15 6 13 8 10.500 L14 4.200 C16 2.500 20 2 23 2.800 C25.500 3.500 27.500 5 28 6.500 V14 C26 14.800 24 15 22 14.500 C20.500 14 19.500 12.500 18 12.500 C15.500 13 13 15 11 16 C9 17.200 6.500 18.500 5.500 16.700 Z" fill="#e8952a"/><path d="M28 6 L30.500 5.500 V13.500 L28 12 Z" fill="#5fd07a"/></svg>
<svg style="left:265px;top:1125px" width="30" height="30" viewBox="0 0 30 30" fill="none" stroke="#d8d8d8" stroke-width="1.200"><path d="M7.500 9 V1.600 H28.500 V20.500 H23"/><path d="M7.500 1.600 H28.500 V5 H7.500 Z" fill="#0063b1" stroke="#3c9be8"/><rect x="1.600" y="10" width="21.400" height="18.500" fill="#444"/><path d="M1.600 10 H23 V14 H1.600 Z" fill="#0063b1" stroke="#3c9be8"/><g stroke="#3c9be8" stroke-width="1.100"><rect x="7.700" y="16.500" width="3.400" height="3.400"/><rect x="13.200" y="16.500" width="3.400" height="3.400"/><rect x="7.700" y="22" width="3.400" height="3.400"/><rect x="13.200" y="22" width="3.400" height="3.400"/></g></svg>
<!-- CENTER -->
<div class="abs" style="left:502px;top:328px;width:1386px;height:846px;background:#262626"></div>
<div class="abs" style="left:502px;top:327px;width:1386px;height:1px;background:#4a4a4a"></div>
<div class="abs" style="left:520px;top:262px;width:200px;height:56px;background:#444444;border-radius:6px"></div>
<div class="t" id="cDash" style="left:578px;top:277px;font-size:21px;letter-spacing:0.100px">Dashboard1</div>
<div class="abs" style="left:574px;top:304px;width:124px;height:6px;background:#3f6dc8"></div>
<svg style="left:529px;top:274px" width="31" height="30" viewBox="0 0 31 30" fill="none"><path d="M12 23.500 A11.500 11.500 0 1 1 24 10" stroke="#d8d8d8" stroke-width="1.300"/><path d="M6 5.500 L14.500 12 L12 14.500 Z" fill="#d8d8d8"/><rect x="13.500" y="19" width="5" height="10" fill="#555" stroke="#bbb" stroke-width="1"/><rect x="18.500" y="12.500" width="5" height="16.500" fill="#444" stroke="#d8d8d8" stroke-width="1"/><rect x="23.500" y="16.500" width="5" height="12.500" fill="#0063b1" stroke="#3c9be8" stroke-width="1"/></svg>
<div class="abs" style="left:522px;top:348px;width:1300px;height:682px;background:#fff"></div>
<svg style="left:0;top:0" width="1" height="1"><path d="M577.5 359 V1019 M621.5 359 V1019 M665.5 359 V1019 M709.5 359 V1019 M753.5 359 V1019 M797.5 359 V1019 M841.5 359 V1019 M885.5 359 V1019 M929.5 359 V1019 M973.5 359 V1019 M1017.5 359 V1019 M1061.5 359 V1019 M1105.5 359 V1019 M1149.5 359 V1019 M1193.5 359 V1019 M1237.5 359 V1019 M1281.5 359 V1019 M1325.5 359 V1019 M1369.5 359 V1019 M1413.5 359 V1019 M1457.5 359 V1019 M1501.5 359 V1019 M1545.5 359 V1019 M1589.5 359 V1019 M1633.5 359 V1019 M1677.5 359 V1019 M1721.5 359 V1019 M1765.5 359 V1019 M533 403.5 H1800 M533 447.5 H1800 M533 491.5 H1800 M533 535.5 H1800 M533 579.5 H1800 M533 623.5 H1800 M533 667.5 H1800 M533 711.5 H1800 M533 755.5 H1800 M533 799.5 H1800 M533 843.5 H1800 M533 887.5 H1800 M533 931.5 H1800 M533 975.5 H1800 " stroke="#dedede" stroke-width="1" fill="none"/></svg>
<div class="abs" style="left:734px;top:428px;width:1000px;height:457px;background:#fff;border:1px solid #b4b4b4"></div>
<div class="t" id="cTable" style="left:739px;top:437px;font-size:17px;color:#8a8a8a">Table</div>
<div class="abs" style="left:738px;top:466px;width:1000px;height:30px;background:#3498db"></div>
<div class="abs" style="left:851px;top:466px;width:1px;height:30px;background:#d0e4f4"></div>
<div class="abs" style="left:989px;top:466px;width:1px;height:30px;background:#d0e4f4"></div>
<div class="t" id="cH1" style="left:757px;top:474px;font-size:14.700px;color:#fff">CategoryID</div>
<div class="t" id="cH2" style="left:871px;top:474px;font-size:14.700px;color:#fff">CategoryName</div>
<div class="t r" style="left:800px;width:50px;text-align:right;top:504px;font-size:14.700px;color:#2e2e2e">1</div>
<div class="t r" style="left:852px;top:504px;font-size:14.700px;color:#2e2e2e">Beverages</div>
<div class="t r" style="left:990px;top:504px;font-size:14.700px;color:#2e2e2e">Soft drinks, coffees, teas</div>
<div class="abs" style="left:738px;top:526px;width:1000px;height:30px;background:#eeeeee"></div>
<div class="t r" style="left:800px;width:50px;text-align:right;top:534px;font-size:14.700px;color:#2e2e2e">2</div>
<div class="t r" style="left:852px;top:534px;font-size:14.700px;color:#2e2e2e">Condiments</div>
<div class="t r" style="left:990px;top:533px;font-size:14.700px;color:#2e2e2e">Sweet and savory sauces</div>
<div class="t r" style="left:800px;width:50px;text-align:right;top:564px;font-size:14.700px;color:#2e2e2e">3</div>
<div class="t r" style="left:852px;top:564px;font-size:14.700px;color:#2e2e2e">Confections</div>
<div class="t r" style="left:990px;top:564px;font-size:14.700px;color:#2e2e2e">Desserts, candies</div>
<div class="abs" style="left:738px;top:586px;width:1000px;height:30px;background:#eeeeee"></div>
<div class="t r" style="left:800px;width:50px;text-align:right;top:594px;font-size:14.700px;color:#2e2e2e">4</div>
<div class="t r" style="left:852px;top:594px;font-size:14.700px;color:#2e2e2e">Dairy Products</div>
<div class="t r" style="left:990px;top:594px;font-size:14.700px;color:#2e2e2e">Cheeses</div>
<div class="t r" style="left:800px;width:50px;text-align:right;top:624px;font-size:14.700px;color:#2e2e2e">5</div>
<div class="t r" style="left:852px;top:624px;font-size:14.700px;color:#2e2e2e">Grains/Cereals</div>
<div class="t r" style="left:990px;top:624px;font-size:14.700px;color:#2e2e2e">Breads, crackers</div>
<div class="abs" style="left:738px;top:646px;width:1000px;height:30px;background:#eeeeee"></div>
<div class="t r" style="left:800px;width:50px;text-align:right;top:654px;font-size:14.700px;color:#2e2e2e">6</div>
<div class="t r" style="left:852px;top:654px;font-size:14.700px;color:#2e2e2e">Meat/Poultry</div>
<div class="t r" style="left:990px;top:654px;font-size:14.700px;color:#2e2e2e">Prepared meats</div>
<div class="t r" style="left:800px;width:50px;text-align:right;top:684px;font-size:14.700px;color:#2e2e2e">7</div>
<div class="t r" style="left:852px;top:684px;font-size:14.700px;color:#2e2e2e">Produce</div>
<div class="t r" style="left:990px;top:684px;font-size:14.700px;color:#2e2e2e">Dried fruit and bean curd</div>
<div class="abs" style="left:738px;top:706px;width:1000px;height:30px;background:#eeeeee"></div>
<div class="t r" style="left:800px;width:50px;text-align:right;top:714px;font-size:14.700px;color:#2e2e2e">8</div>
<div class="t r" style="left:852px;top:714px;font-size:14.700px;color:#2e2e2e">Seafood</div>
<div class="t r" style="left:990px;top:714px;font-size:14.700px;color:#2e2e2e">Seaweed and fish</div>
<div class="abs" style="left:851px;top:496px;width:1px;height:240px;background:#d8d8d8"></div>
<div class="abs" style="left:989px;top:496px;width:1px;height:240px;background:#d8d8d8"></div>
<!-- DIALOG -->
<style>.dl{position:absolute;white-space:nowrap;line-height:1;font-size:17px;color:#c4c4c4}.dv{position:absolute;white-space:nowrap;line-height:1;font-size:17px;color:#fff}.inp{position:absolute;border:1.500px solid #b8b8b8;border-radius:4px;background:#2b2b2b}.sql{position:absolute;white-space:pre;line-height:20px;font-size:16.700px;letter-spacing:1.130px;font-family:"Liberation Mono","DejaVu Sans Mono",monospace;left:1099px}.k{color:#4e94ce}.i{color:#43b9a0}.o{color:#b4b4b4}</style>
<div class="abs" style="left:1071px;top:207px;width:793px;height:943px;background:#0078d7;border-radius:20px"></div><div class="abs" style="left:1073px;top:247px;width:789px;height:901px;background:#333333;border-radius:0 0 18px 18px"></div>
<div class="t" id="gTitle" style="left:1081px;top:220px;font-size:16.200px;color:rgba(255,255,255,0.920)">Edit Data Source</div>
<div class="t" id="gQ" style="left:1763px;top:220px;font-size:15px;color:#fff">?</div>
<svg style="left:1825px;top:220px" width="14" height="14" viewBox="0 0 14 14"><path d="M1 1 L13 13 M13 1 L1 13" stroke="#fff" stroke-width="1.300"/></svg>
<div class="dl" id="gl1" style="left:1094px;top:279px">Name in Source</div>
<div class="dl" id="gl2" style="left:1094px;top:328px">Name</div>
<div class="dl" id="gl3" style="left:1094px;top:381px">Alias</div>
<div class="inp" style="left:1341px;top:265px;width:504px;height:34px"></div>
<div class="dv" id="gv1" style="left:1347px;top:275px">MS SQL</div>
<svg style="left:1821px;top:274px" width="18" height="18" viewBox="0 0 18 18" fill="none" stroke="#c8c8c8" stroke-width="1.100"><path d="M12.500 2 L16 5.500 L6 15.500 L1.500 16.500 L2.500 12 Z M10.500 4 L14 7.500"/></svg>
<div class="inp" style="left:1341px;top:317px;width:253px;height:34px"></div>
<div class="dv" id="gv2" style="left:1348px;top:327px">Categories</div>
<div class="inp" style="left:1341px;top:368px;width:253px;height:34px"></div>
<div class="dv" id="gv3" style="left:1348px;top:379px">Categories</div>
<div class="abs" style="left:1088px;top:424px;width:759px;height:33px;background:#4a4a4a"></div>
<div class="dl" id="gh1" style="left:1107px;top:432px;font-weight:bold;color:#c4c4c4">Query</div>
<svg style="left:1108.500px;top:472.500px" width="9" height="21" viewBox="0 0 9 21"><path d="M2.300 0.500 H6.700 L5.400 14 H3.600 Z" fill="#e03a3a"/><circle cx="4.500" cy="18.300" r="1.900" fill="#e03a3a"/></svg>
<svg style="left:1147px;top:472px" width="22" height="22" viewBox="0 0 22 22" fill="none"><path d="M19.300 11 V19.300 H1.700 V2 H19.300 V5" stroke="#c8c8c8" stroke-width="1.200"/><path d="M1.700 1.500 H19.300 V4.800 H1.700 Z" fill="#0063b1" stroke="#3c9be8" stroke-width="0.900"/><path d="M17.500 6.500 C18.800 5.200 21.200 7.600 20 8.800 L9 19.500 L5.500 20.500 L6.500 17 Z" fill="#333" stroke="#2e86d0" stroke-width="1.300"/><path d="M6.500 17 L9 19.500 L5.500 20.500 Z" fill="#2e86d0"/></svg>
<svg style="left:1193px;top:472px" width="23" height="22" viewBox="0 0 23 22" fill="none"><path d="M10 19.300 H1.600 V1.500 H20.400 V10" stroke="#c8c8c8" stroke-width="1.200"/><path d="M1.600 1.200 H20.400 V6.500 H1.600 Z" fill="#0063b1" stroke="#3c9be8" stroke-width="0.900"/><circle cx="14.600" cy="14" r="4.500" stroke="#c8c8c8" stroke-width="1.300"/><path d="M18 17.300 L21.500 20.500" stroke="#c8c8c8" stroke-width="2.200" stroke-linecap="round"/></svg>
<svg style="left:1242px;top:472.500px" width="16" height="20" viewBox="0 0 16 20"><path d="M6.500 0.500 H14.500 L9.500 7.500 H14.500 L3 19.500 L6.500 10.500 H1 Z" fill="#eda02f"/></svg>
<div class="inp" style="left:1092px;top:522px;width:752px;height:113px;border-radius:3px"></div>
<div class="sql" id="gsql1" style="top:530px"><span class="k">select</span> <span class="o">*</span> <span class="k">from</span> <span class="i">Categories</span></div>
<div class="sql" id="gsql2" style="top:550px">    <span class="k">where</span> <span class="i">CategoryID</span> <span class="o">=</span> <span class="o">1</span></div>
<div class="dl" id="gl4" style="left:1094px;top:661px">Type</div>
<div class="inp" style="left:1341px;top:649px;width:311px;height:34px"></div>
<div class="dv" id="gv4" style="left:1349px;top:659px">Query</div>
<svg style="left:1631px;top:662px" width="12" height="8" viewBox="0 0 12 8"><path d="M1 1 L6 6.500 L11 1" stroke="#c8c8c8" stroke-width="1.200" fill="none"/></svg>
<div class="dl" id="gl5" style="left:1094px;top:711px">Query Timeout</div>
<div class="inp" style="left:1341px;top:701px;width:311px;height:34px"></div>
<div class="dv" id="gv5" style="left:1349px;top:710px">30</div>
<svg style="left:1631px;top:706px" width="12" height="8" viewBox="0 0 12 8"><path d="M1 7 L6 1.500 L11 7" stroke="#c8c8c8" stroke-width="1.200" fill="none"/></svg>
<svg style="left:1631px;top:721px" width="12" height="8" viewBox="0 0 12 8"><path d="M1 1 L6 6.500 L11 1" stroke="#c8c8c8" stroke-width="1.200" fill="none"/></svg>
<div class="abs" style="left:1088px;top:766px;width:759px;height:34px;background:#4a4a4a"></div>
<div class="dl" id="gh2" style="left:1107px;top:774px;font-weight:bold;color:#c4c4c4">Columns &amp; Parameters</div>
<!-- DIALOG B -->
<svg style="left:1100px;top:816px" width="24" height="22" viewBox="0 0 24 22"><rect x="3.500" y="6.500" width="19" height="12.500" fill="none" stroke="#d8d8d8" stroke-width="1.100"/><text x="13" y="16.500" font-size="10.500" fill="#9a9a9a" text-anchor="middle" font-family="Liberation Mono,monospace" textLength="14" lengthAdjust="spacingAndGlyphs">abc</text><circle cx="5.4" cy="5.6" r="4.700" fill="#f0a030"/><path d="M2.9000000000000004 5.6 H7.9 M5.4 3.0999999999999996 V8.1 M3.6000000000000005 3.8 L7.2 7.3999999999999995 M7.2 3.8 L3.6000000000000005 7.3999999999999995" stroke="#ffe0a0" stroke-width="0.800"/></svg>
<svg style="left:1146px;top:816px" width="26" height="24" viewBox="0 0 26 24"><rect x="3.500" y="6.500" width="17" height="12" fill="none" stroke="#8a8a8a" stroke-width="1"/><text x="8" y="15.500" font-size="9" fill="#8a8a8a" text-anchor="middle" font-family="Liberation Mono,monospace">a</text><circle cx="17" cy="16.500" r="6.300" fill="#333" stroke="#3c9be8" stroke-width="1.100"/><text x="17" y="20" font-size="10" fill="#c8c8c8" text-anchor="middle" font-style="italic" font-family="Liberation Serif,serif">fx</text><circle cx="5.4" cy="5.6" r="4.700" fill="#f0a030"/><path d="M2.9000000000000004 5.6 H7.9 M5.4 3.0999999999999996 V8.1 M3.6000000000000005 3.8 L7.2 7.3999999999999995 M7.2 3.8 L3.6000000000000005 7.3999999999999995" stroke="#ffe0a0" stroke-width="0.800"/></svg>
<svg style="left:1192px;top:816px" width="26" height="24" viewBox="0 0 26 24"><rect x="3" y="7.500" width="7" height="9" fill="none" stroke="#b8b8b8" stroke-width="1"/><rect x="7.500" y="3.800" width="7" height="8.500" fill="#333" stroke="#d8d8d8" stroke-width="1"/><rect x="7.500" y="3.500" width="7" height="2.200" fill="#3c9be8"/><rect x="7.500" y="8" width="2.500" height="2.500" fill="#3c9be8"/><text x="16.500" y="22" font-size="10" fill="#3c9be8" text-anchor="middle" font-family="Liberation Mono,monospace" textLength="12" lengthAdjust="spacingAndGlyphs">[?]</text><circle cx="5" cy="5.6" r="4.700" fill="#f0a030"/><path d="M2.5 5.6 H7.5 M5 3.0999999999999996 V8.1 M3.2 3.8 L6.8 7.3999999999999995 M6.8 3.8 L3.2 7.3999999999999995" stroke="#ffe0a0" stroke-width="0.800"/></svg>
<svg style="left:1238px;top:818px" width="22" height="20" viewBox="0 0 22 20"><path d="M1.500 2.500 C3.500 0.500 7 2.500 9.500 5.500 C13 9.500 17 14.500 21 19.500 C15.500 16.500 10 12.500 6 8.500 C3 5.500 0.800 3.800 1.500 2.500 Z" fill="#e03a45"/><path d="M21 0.500 C15.500 4 10.500 8 6.500 12.500 C3.500 16 0.500 18 1.500 19.500 C3.500 20.500 6.500 18 9 14.500 C12.500 10 16.500 5 21 0.500 Z" fill="#e03a45"/></svg>
<div class="abs" style="left:1281px;top:814px;width:1px;height:27px;background:#505050"></div>
<svg style="left:1303px;top:817px" width="24" height="22" viewBox="0 0 24 22" fill="none"><rect x="1.500" y="1.500" width="14" height="17" stroke="#d8d8d8" stroke-width="1.200"/><path d="M5.500 1.500 V18.500 M5.500 7 H15.500 M5.500 12.500 H15.500" stroke="#d8d8d8" stroke-width="1.100"/><rect x="1.500" y="1.500" width="4" height="17" fill="#0063b1" stroke="#3c9be8" stroke-width="1"/><path d="M1.500 7 H5.500 M1.500 12.500 H5.500" stroke="#3c9be8" stroke-width="0.800"/><path d="M13 18 H22 M17.500 13.500 V22.500" stroke="#2ea84a" stroke-width="1.200"/></svg>
<div class="dv" id="gRet" style="left:1329px;top:820px">Retrieve Columns</div>
<svg style="left:1479px;top:826px" width="12" height="8" viewBox="0 0 12 8"><path d="M1 1 L6 6.500 L11 1" stroke="#c8c8c8" stroke-width="1.200" fill="none"/></svg>
<div class="inp" style="left:1090px;top:863px;width:753px;height:197px;border-radius:3px;border-width:1.300px;border-color:#a8a8a8"></div>
<svg style="left:0;top:0" width="1" height="1"><path d="M1117.500 897 V976 M1118 908.500 H1130 M1118 930.500 H1130 M1118 953.500 H1130 M1118 975.500 H1130" stroke="#666" stroke-width="1" stroke-dasharray="1 2" fill="none"/></svg>
<svg style="left:1107px;top:880px" width="20" height="12" viewBox="0 0 20 12"><rect x="0.550" y="0.550" width="18.9" height="10.9" fill="none" stroke="#d8d8d8" stroke-width="1.100"/><text x="10.0" y="9.300" font-size="9.500" fill="#3c9be8" text-anchor="middle" font-family="Liberation Mono,monospace" textLength="13" lengthAdjust="spacingAndGlyphs">abc</text></svg>
<div class="dv" id="gc0" style="left:1132px;top:877px">Columns</div>
<svg style="left:1132px;top:902px" width="20" height="12" viewBox="0 0 20 12"><rect x="0.550" y="0.550" width="18.9" height="10.9" fill="none" stroke="#d8d8d8" stroke-width="1.100"/><text x="10.0" y="9.300" font-size="9.500" fill="#3c9be8" text-anchor="middle" font-family="Liberation Mono,monospace" textLength="13" lengthAdjust="spacingAndGlyphs">123</text></svg>
<div class="dv" id="gc_CategoryID" style="left:1157px;top:900.0px">CategoryID</div>
<svg style="left:1132px;top:925px" width="20" height="12" viewBox="0 0 20 12"><rect x="0.550" y="0.550" width="18.9" height="10.9" fill="none" stroke="#d8d8d8" stroke-width="1.100"/><text x="10.0" y="9.300" font-size="9.500" fill="#3c9be8" text-anchor="middle" font-family="Liberation Mono,monospace" textLength="13" lengthAdjust="spacingAndGlyphs">abc</text></svg>
<div class="dv" id="gc_CategoryName" style="left:1157px;top:922.2px">CategoryName</div>
<svg style="left:1132px;top:947px" width="20" height="12" viewBox="0 0 20 12"><rect x="0.550" y="0.550" width="18.9" height="10.9" fill="none" stroke="#d8d8d8" stroke-width="1.100"/><text x="10.0" y="9.300" font-size="9.500" fill="#3c9be8" text-anchor="middle" font-family="Liberation Mono,monospace" textLength="13" lengthAdjust="spacingAndGlyphs">abc</text></svg>
<div class="dv" id="gc_Description" style="left:1157px;top:944.5px">Description</div>
<svg style="left:1132px;top:969px" width="20" height="12" viewBox="0 0 20 12"><rect x="0.550" y="0.550" width="18.9" height="10.9" fill="none" stroke="#d8d8d8" stroke-width="1.100"/><text x="10.0" y="9.300" font-size="9.500" fill="#3c9be8" text-anchor="middle" font-family="Liberation Mono,monospace" textLength="13" lengthAdjust="spacingAndGlyphs">010</text></svg>
<div class="dv" id="gc_Picture" style="left:1157px;top:966.5px">Picture</div>
<div class="abs" style="left:1130px;top:987px;width:92px;height:22px;background:#0078d7"></div>
<div class="dv" id="gcP" style="left:1132px;top:989.500px">Parameters</div>
<div class="dv" id="gcPi" style="left:1105px;top:990px;color:#3a5878;font-family:'Liberation Mono',monospace;font-size:16px;letter-spacing:-2.500px">[?]</div>
<div class="abs" style="left:1533px;top:956px;width:1px;height:56px;background:#505050"></div>
<div class="abs" style="left:1542px;top:875px;width:288px;height:39px;background:#333333"></div>
<div class="abs" style="left:1543px;top:916px;width:287px;height:119px;background:#1f1f1f"></div>
<div class="abs" style="left:1543px;top:1035px;width:287px;height:12px;background:#2e2e2e"></div>
<div class="abs" style="left:1549px;top:879px;width:35px;height:30px;background:#4a4a4a;border-radius:4px"></div>
<svg style="left:1556px;top:883px" width="22" height="23" viewBox="0 0 22 23"><rect x="1" y="1.300" width="8.500" height="8.500" rx="1.500" fill="#0078d7" stroke="#3c9be8" stroke-width="0.800"/><rect x="1" y="13.400" width="8.500" height="8.500" rx="1.500" fill="#0078d7" stroke="#3c9be8" stroke-width="0.800"/><path d="M3 5.500 H7.500 M5.250 3.300 V7.800 M3 17.600 H7.500 M5.250 15.400 V19.900" stroke="#fff" stroke-width="1"/><path d="M11 1.500 H15 M11 5 H14.500 M16.500 5 H20 M11 8.500 H14.500 M16.500 8.500 H20 M11 11.500 H14.500 M16.500 11.500 H20" stroke="#888" stroke-width="1"/><path d="M11 18 H15 M11 21.500 H14.500 M16.500 21.500 H20" stroke="#bbb" stroke-width="1"/></svg>
<div class="t" id="gAZa" style="left:1595px;top:883px;font-size:13px;font-weight:bold;color:#3c9be8">A</div>
<div class="t" id="gAZz" style="left:1595px;top:894px;font-size:13px;font-weight:bold;color:#e0e0e0">Z</div>
<svg style="left:1605px;top:884px" width="11" height="21" viewBox="0 0 11 21"><path d="M5.500 1 V19 M1 14.500 L5.500 19.500 L10 14.500" stroke="#e0e0e0" stroke-width="1.400" fill="none"/></svg>
<div class="abs" style="left:1632px;top:883px;width:1px;height:22px;background:#505050"></div>
<svg style="left:1648px;top:884px" width="20" height="20" viewBox="0 0 20 20"><path d="M19.76 7.82 L19.76 12.18 L16.67 13.64 L17.29 12.14 L18.44 15.36 L15.36 18.44 L12.14 17.29 L13.64 16.67 L12.18 19.76 L7.82 19.76 L6.36 16.67 L7.86 17.29 L4.64 18.44 L1.56 15.36 L2.71 12.14 L3.33 13.64 L0.24 12.18 L0.24 7.82 L3.33 6.36 L2.71 7.86 L1.56 4.64 L4.64 1.56 L7.86 2.71 L6.36 3.33 L7.82 0.24 L12.18 0.24 L13.64 3.33 L12.14 2.71 L15.36 1.56 L18.44 4.64 L17.29 7.86 L16.67 6.36 Z M10 5.500 A4.500 4.500 0 1 0 10 14.500 A4.500 4.500 0 1 0 10 5.500 Z" fill="#3c9be8" fill-rule="evenodd"/></svg>
<svg style="left:1673px;top:891px" width="11" height="7" viewBox="0 0 11 7"><path d="M1 1 L5.500 5.500 L10 1" stroke="#c8c8c8" stroke-width="1.100" fill="none"/></svg>
<div class="abs" style="left:1088px;top:1098px;width:149px;height:37px;background:#4d4d4d;border-radius:5px"></div>
<div class="dv" id="gb1" style="left:1112px;top:1108.500px;letter-spacing:0.200px">Save a Copy</div>
<div class="abs" style="left:1596px;top:1098px;width:120px;height:37px;background:#3f6ab9;border-radius:5px"></div>
<div class="dv" id="gb2" style="left:1643px;top:1108.500px"><span class="u">O</span>K</div>
<div class="abs" style="left:1727px;top:1098px;width:120px;height:37px;background:#4d4d4d;border-radius:5px"></div>
<div class="dv" id="gb3" style="left:1760px;top:1108.500px"><span class="u">C</span>ancel</div>
</div>
</body>
</html>
